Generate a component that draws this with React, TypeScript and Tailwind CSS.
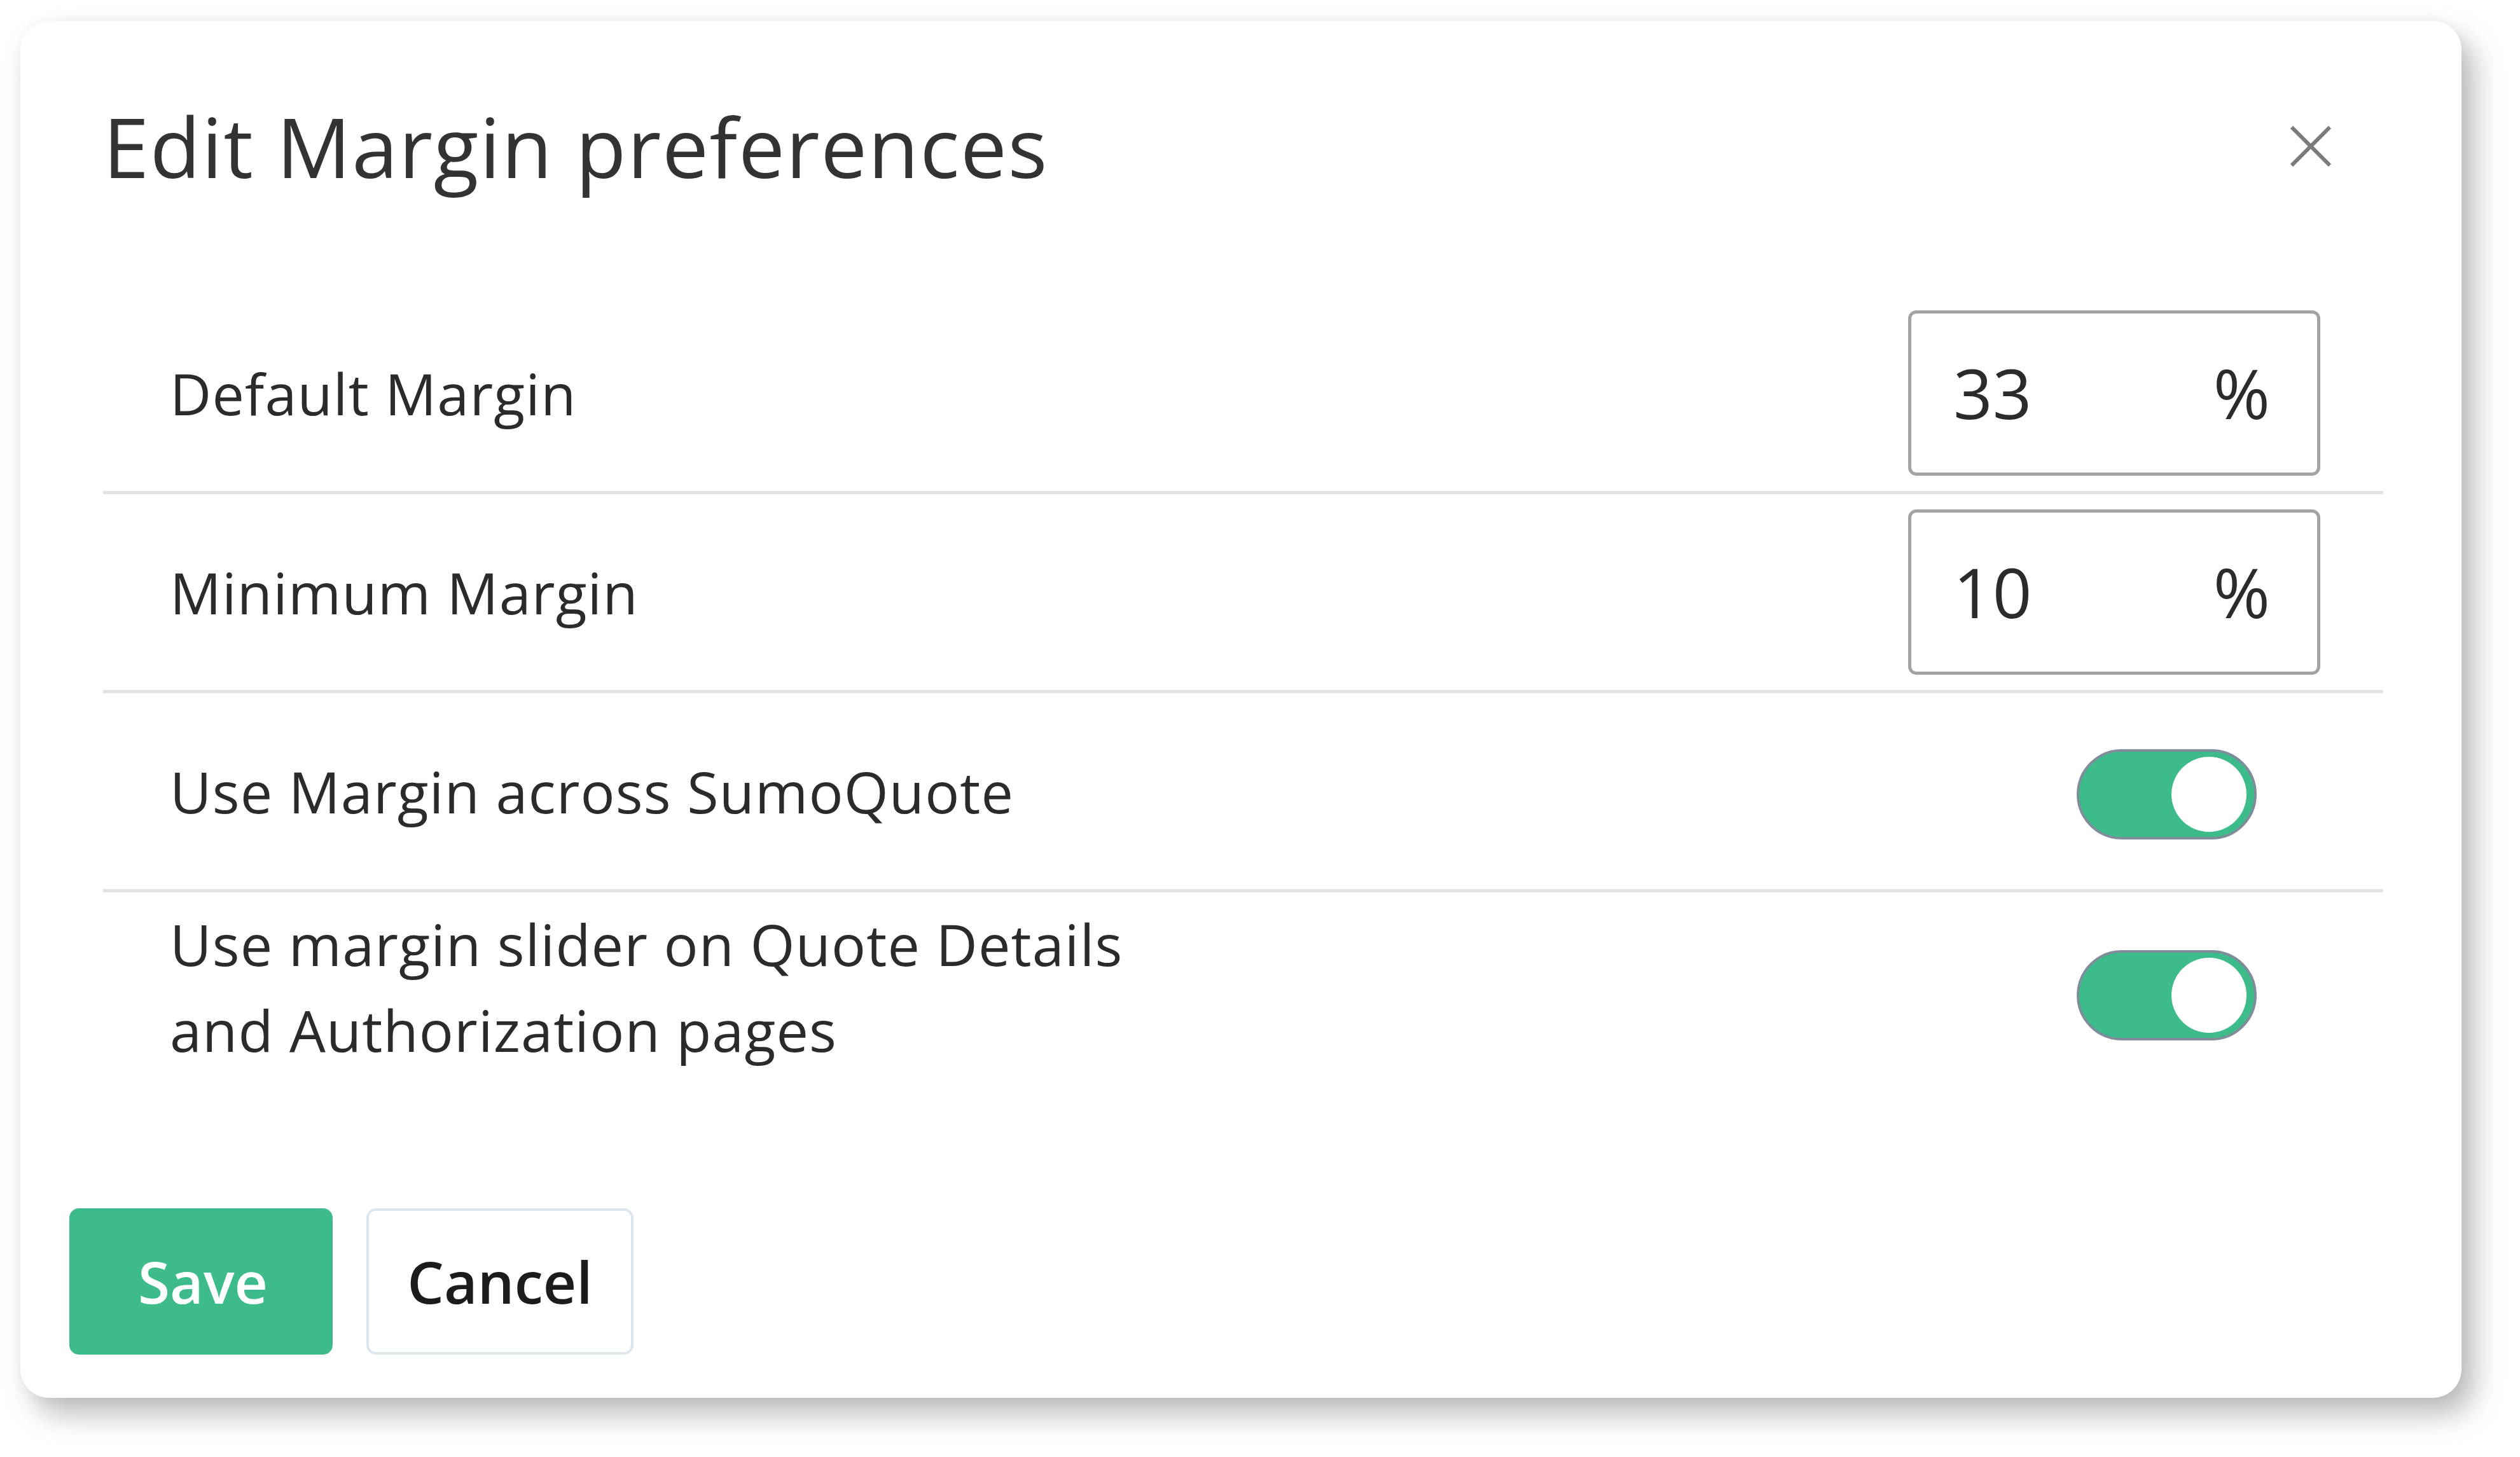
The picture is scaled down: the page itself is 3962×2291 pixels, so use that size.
import React from "react";

function Toggle({ className = "" }: { className?: string }) {
  return (
    <div
      className={`flex h-[142px] w-[283px] shrink-0 items-center justify-end rounded-full border-[4px] border-[#7f8c99] bg-[#3dbb8a] pr-[12px] ${className}`}
    >
      <div className="h-[118px] w-[118px] rounded-full bg-white" />
    </div>
  );
}

function PercentInput({ value }: { value: string }) {
  return (
    <div className="mr-[99px] flex h-[260px] w-[648px] shrink-0 items-center justify-between rounded-[13px] border-[5px] border-[#a3a3a3] bg-white pl-[66px] pr-[74px] text-[108px] leading-none text-[#2b2b2b]">
      <span>{value}</span>
      <span>%</span>
    </div>
  );
}

export default function App() {
  return (
    <div className="min-h-screen bg-white pl-[32px] pt-[33px] font-['Open_Sans',sans-serif]">
      <div className="w-[3838px] rounded-[45px] bg-white pb-[68px] pl-[130px] pr-[123px] pt-[108px] shadow-[20px_26px_46px_rgba(0,0,0,0.27),0_0_26px_rgba(0,0,0,0.04)]">
        <div className="flex h-[177px] items-center justify-between">
          <h1 className="text-[130px] font-normal leading-[177px] tracking-[1.6px] text-[#333333]">
            Edit Margin preferences
          </h1>
          <button className="mr-[82px] flex h-[64px] w-[64px] items-center justify-center">
            <svg width="64" height="64" viewBox="0 0 64 64">
              <line x1="2" y1="2" x2="62" y2="62" stroke="#7b7b7b" strokeWidth="6" />
              <line x1="62" y1="2" x2="2" y2="62" stroke="#7b7b7b" strokeWidth="6" />
            </svg>
          </button>
        </div>

        <div className="mt-[146px]">
          <div className="flex h-[313px] items-center justify-between border-b-[5px] border-[#e3e3e3] pl-[105px]">
            <span className="text-[90px] leading-[135px] tracking-[1.1px] text-[#2b2b2b]">Default Margin</span>
            <PercentInput value="33" />
          </div>
          <div className="flex h-[313px] items-center justify-between border-b-[5px] border-[#e3e3e3] pl-[105px]">
            <span className="text-[90px] leading-[135px] tracking-[1.1px] text-[#2b2b2b]">Minimum Margin</span>
            <PercentInput value="10" />
          </div>
          <div className="flex h-[313px] items-center justify-between border-b-[5px] border-[#e3e3e3] pl-[105px]">
            <span className="text-[90px] leading-[135px] tracking-[1.1px] text-[#2b2b2b]">Use Margin across SumoQuote</span>
            <Toggle className="mr-[199px] mt-[10px]" />
          </div>
          <div className="flex items-center justify-between pl-[105px] pt-[14px]">
            <span className="text-[90px] leading-[135px] tracking-[1.1px] text-[#2b2b2b]">
              Use margin slider on Quote Details
              <br />
              and Authorization pages
            </span>
            <Toggle className="mr-[199px] mt-[26px]" />
          </div>
        </div>

        <div className="-ml-[53px] mt-[213px] flex gap-[53px]">
          <button className="flex h-[230px] w-[414px] items-center justify-center rounded-[15px] bg-[#3dbb8a] pl-[6px] text-[91px] font-semibold text-white">
            Save
          </button>
          <button className="flex h-[230px] w-[420px] items-center justify-center rounded-[15px] border-[4px] border-[#dde6ee] bg-white text-[91px] font-semibold text-[#1c1c1c]">
            Cancel
          </button>
        </div>
      </div>
    </div>
  );
}
